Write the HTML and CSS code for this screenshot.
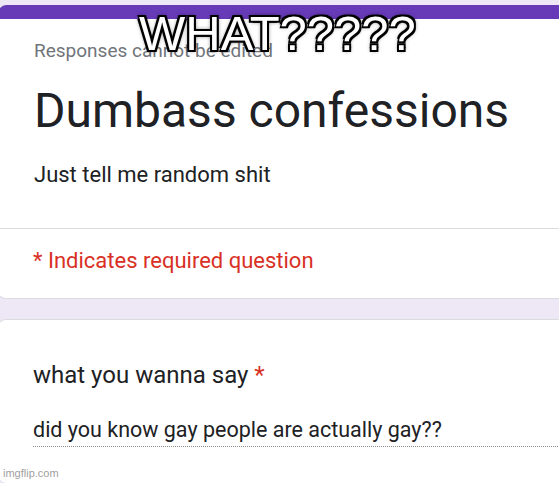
FILE: index.html
```html
<!DOCTYPE html>
<html lang="en">
<head>
    <meta charset="UTF-8">
    <title>Dumbass confessions</title>
    <link rel="stylesheet" href="styles.css">
</head>
<body>
    <!-- Texte du meme par-dessus la capture -->
    <div class="meme-caption">WHAT?????</div>

    <div class="form-card header-card">
        <div class="top-bar"></div>
        <div class="header-body">
            <div class="notice">Responses cannot be edited</div>
            <h1 class="form-title">Dumbass confessions</h1>
            <div class="form-desc">Just tell me random shit</div>
        </div>
        <div class="required-note">* Indicates required question</div>
    </div>

    <div class="form-card question-card">
        <div class="question-title">what you wanna say <span class="star">*</span></div>
        <div class="answer">did you know gay people are actually gay??</div>
    </div>

    <div class="watermark">imgflip.com</div>
</body>
</html>
```

FILE: styles.css
```css
html, body {
    overflow: hidden;
}

body {
    margin: 0;
    height: 483px;
    position: relative;
    background-color: #ede7f6; /* fond lavande de Google Forms */
    font-family: Roboto, "Liberation Sans", sans-serif;
    color: #202124;
}

.form-card {
    background: #ffffff;
    border: 1px solid #dadce0;
    border-radius: 9px;
    margin-left: -3px;
    margin-right: -12px;
    padding-left: 35px;
    overflow: hidden;
}

.header-card {
    margin-top: 5px;
    padding-left: 0;
    border-top: none;
}

.top-bar {
    height: 14px;
    background-color: #673ab7;
}

.header-body {
    padding: 20px 0 39px 36px;
    border-bottom: 1px solid #dadce0;
}

.notice {
    font-size: 19px;
    line-height: 24px;
    color: #70757a;
}

.form-title {
    margin: 20px 0 0 0;
    font-size: 48px;
    line-height: 56px;
    font-weight: 400;
}

.form-desc {
    margin-top: 22px;
    font-size: 22px;
    line-height: 28px;
}

.required-note {
    padding: 18px 0 23px 35px;
    font-size: 22px;
    line-height: 28px;
    color: #d93025;
}

.question-card {
    margin-top: 20px;
    padding-top: 40px;
    height: 123px;
    border-bottom: none;
}

.question-title {
    font-size: 24px;
    line-height: 30px;
}

.star {
    color: #d93025;
}

.answer {
    margin-top: 26px;
    padding-bottom: 2px;
    font-size: 21.5px;
    line-height: 28px;
    border-bottom: 1px dotted #8a8a8a;
}

/* Légende blanche du meme, posée sur la capture */
.meme-caption {
    position: absolute;
    top: 5px;
    left: 139px;
    font-family: "Liberation Sans", Arial, sans-serif;
    font-size: 49px;
    line-height: 56px;
    color: #ffffff;
    text-shadow: -2px -2px 0 #000, 2px -2px 0 #000, -2px 2px 0 #000, 2px 2px 0 #000, 0 0 5px #000;
    z-index: 2;
}

.watermark {
    position: absolute;
    left: 3px;
    bottom: 4px;
    font-family: "Liberation Sans", Arial, sans-serif;
    font-size: 11px;
    color: #a0a0a0;
}
```
